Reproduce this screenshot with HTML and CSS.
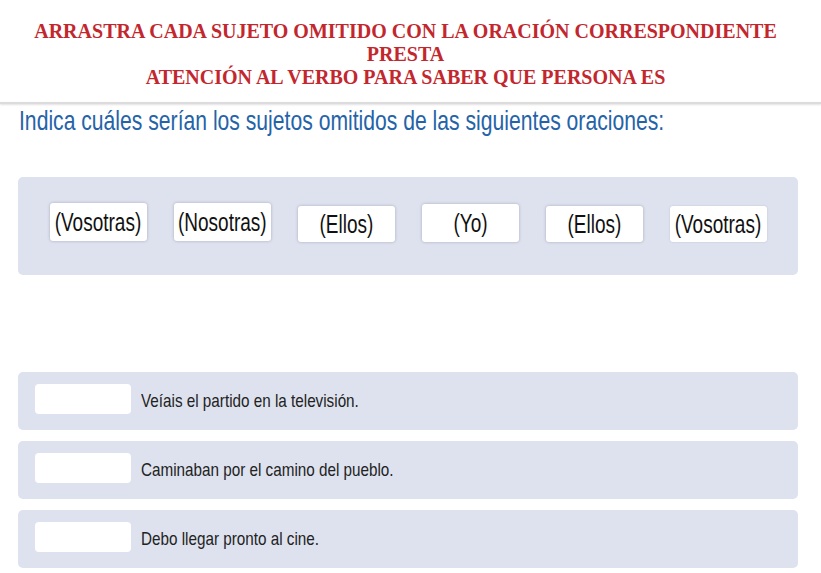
FILE: index.html
```html
<!DOCTYPE html>
<html lang="es">
<head>
<meta charset="utf-8">
<title>Sujetos omitidos</title>
<link rel="stylesheet" href="styles.css">
</head>
<body>
<header class="title">
  <p>ARRASTRA CADA SUJETO OMITIDO CON LA ORACIÓN CORRESPONDIENTE<br>PRESTA<br>ATENCIÓN AL VERBO PARA SABER QUE PERSONA ES</p>
</header>
<div class="separator"></div>
<main class="content">
  <h1 class="question"><span class="narrow">Indica cuáles serían los sujetos omitidos de las siguientes oraciones:</span></h1>
  <section class="bank">
    <div class="cell"><span class="chip"><span class="chip-text">(Vosotras)</span></span></div>
    <div class="cell"><span class="chip"><span class="chip-text">(Nosotras)</span></span></div>
    <div class="cell"><span class="chip chip-low"><span class="chip-text">(Ellos)</span></span></div>
    <div class="cell"><span class="chip chip-mid"><span class="chip-text">(Yo)</span></span></div>
    <div class="cell"><span class="chip chip-low"><span class="chip-text">(Ellos)</span></span></div>
    <div class="cell"><span class="chip chip-low chip-soft"><span class="chip-text">(Vosotras)</span></span></div>
  </section>
  <section class="rows">
    <div class="row"><span class="slot"></span><span class="sentence">Veíais el partido en la televisión.</span></div>
    <div class="row"><span class="slot"></span><span class="sentence">Caminaban por el camino del pueblo.</span></div>
    <div class="row"><span class="slot"></span><span class="sentence">Debo llegar pronto al cine.</span></div>
  </section>
</main>
</body>
</html>
```
FILE: styles.css
```css
html, body {
  margin: 0;
  padding: 0;
  background: #ffffff;
}

body {
  font-family: "Liberation Sans", Arial, sans-serif;
  color: #222;
  overflow-x: hidden;
}

.title {
  padding-top: 20px;
  padding-right: 10px;
  text-align: center;
}

.title p {
  margin: 0;
  font-family: "Liberation Serif", "Times New Roman", serif;
  font-weight: bold;
  font-size: 20px;
  line-height: 23px;
  color: #c3272e;
}

.separator {
  margin-top: 13px;
  height: 2px;
  background: #dcdcdc;
  box-shadow: 0 1px 2px rgba(0, 0, 0, 0.12);
}

.content {
  padding: 0 23px 0 18px;
}

.question {
  margin: 1px 0 0 1px;
  font-weight: normal;
  font-size: 28px;
  line-height: 32px;
  color: #2563a8;
  white-space: nowrap;
  overflow: hidden;
}

.narrow {
  display: inline-block;
  transform: scaleX(0.755);
  transform-origin: left center;
}

.bank {
  margin-top: 40px;
  height: 98px;
  box-sizing: border-box;
  padding: 26px 18px 0;
  background: #dee2ef;
  border-radius: 5px;
  display: grid;
  grid-template-columns: repeat(6, 1fr);
  align-items: start;
}

.cell {
  display: flex;
  justify-content: center;
}

.chip {
  display: flex;
  align-items: center;
  justify-content: center;
  width: 97px;
  height: 38px;
  background: #ffffff;
  border-radius: 3px;
  box-shadow: 0 0 3px rgba(60, 60, 80, 0.35);
  white-space: nowrap;
  overflow: hidden;
}

.chip-text {
  display: inline-block;
  font-size: 25px;
  color: #111;
  transform: scaleX(0.76);
}

.chip-low {
  margin-top: 3px;
  height: 36px;
}

.chip-mid {
  margin-top: 1px;
}

.chip-soft {
  box-shadow: 0 0 2px rgba(60, 60, 80, 0.2);
}

.rows {
  margin-top: 97px;
  display: flex;
  flex-direction: column;
  gap: 11px;
}

.row {
  height: 58px;
  background: #dee2ef;
  border-radius: 5px;
  display: flex;
  align-items: center;
  padding-left: 17px;
  overflow: hidden;
}

.slot {
  flex: none;
  width: 96px;
  height: 30px;
  background: #ffffff;
  border-radius: 4px;
  margin-top: -5px;
  margin-right: 10px;
}

.sentence {
  display: inline-block;
  font-size: 18.6px;
  color: #222;
  white-space: nowrap;
  transform: scaleX(0.82);
  transform-origin: left center;
}
```
